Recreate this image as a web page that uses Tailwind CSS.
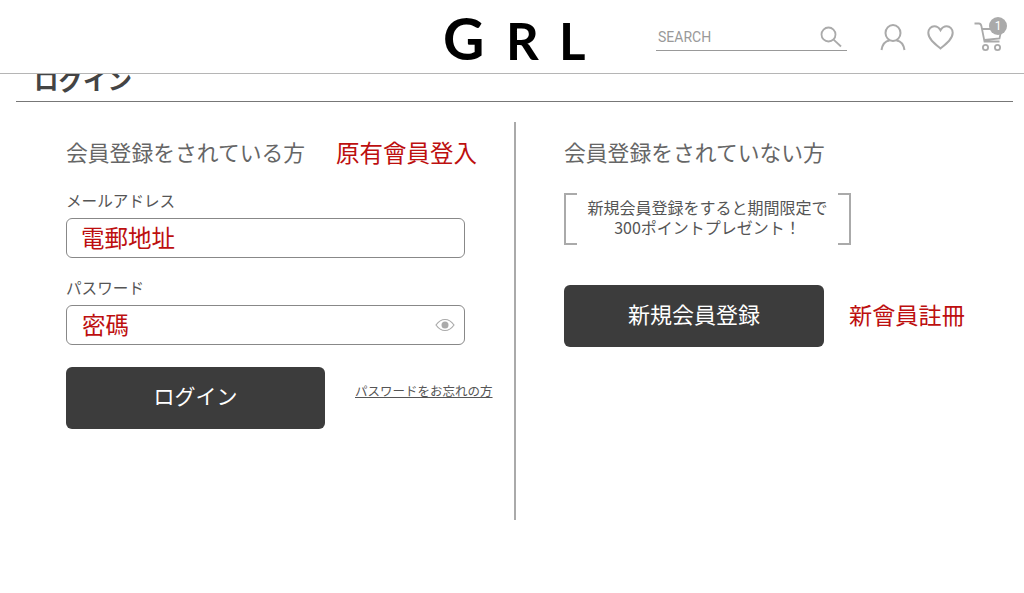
<!DOCTYPE html>
<html lang="ja">
<head>
<meta charset="utf-8">
<title>GRL ログイン</title>
<script src="https://cdn.jsdelivr.net/npm/@tailwindcss/browser@4"></script>
</head>
<body class="bg-white font-['Noto_Sans_CJK_JP','Noto_Sans_CJK_TC',sans-serif] overflow-hidden">
  <!-- header -->
  <header class="relative z-10 h-[74px] bg-white border-b border-[#b5b5b5] flex items-center text-[#aaa]">
    <div class="ml-[443px] mt-[4px] w-[213px] flex items-baseline font-['Lato',sans-serif] font-bold text-[51px] leading-none text-black">
      <span class="w-[63px] text-[57px]">G</span>
      <span class="w-[53px]">R</span>
      <span>L</span>
    </div>
    <div class="w-[191px] h-[28px] pl-[2px] pr-[5px] border-b border-[#999] flex items-center justify-between font-['Roboto',sans-serif] text-[14px] text-[#999]">
      <span class="mt-[3px]">SEARCH</span>
      <svg class="w-[22px] h-[22px] mt-[2px]" viewBox="0 0 22 22" fill="none" stroke="#aaa" stroke-width="1.8"><circle cx="8.5" cy="8.5" r="7"/><path d="M13.6 13.6 21 20.5"/></svg>
    </div>
    <svg class="ml-[33px] w-[26px] h-[27px] mt-[2px]" viewBox="0 0 26 27" fill="none" stroke="#aaa" stroke-width="2"><ellipse cx="13" cy="9" rx="7.5" ry="8"/><path d="M1.5 26c1-6 4.500-9 8-9.500M24.500 26c-1-6-4.500-9-8-9.500"/></svg>
    <svg class="ml-[21px] w-[27px] h-[25px] mt-[2px]" viewBox="0 0 27 25" fill="none" stroke="#aaa" stroke-width="2"><path d="M13.500 23.500C8 19 1.300 14 1.300 7.800 1.300 4 4 1.300 7.300 1.300c2.800 0 4.800 1.500 6.200 4 1.400-2.500 3.400-4 6.200-4 3.300 0 6 2.700 6 6.500 0 6.200-6.700 11.200-12.200 15.700Z"/></svg>
    <div class="relative ml-[20px] w-[30px] h-[30px] mt-[1px]">
      <svg class="w-[30px] h-[30px]" viewBox="0 0 30 30" fill="none" stroke="#aaa" stroke-width="1.800"><path d="M0.500 1.500h4.500c1.500 0 2 1 2.400 2.500L10.500 19.500h15M8 7h19.500l-2 9.500-15 1.500"/><circle cx="11.500" cy="25.500" r="2.600"/><circle cx="23.500" cy="25.500" r="2.600"/></svg>
      <span class="absolute left-[15px] top-[-5px] w-[18px] h-[18px] rounded-full bg-[#aaa] text-white text-[12px] leading-[18px] text-center font-['Roboto',sans-serif]">1</span>
    </div>
  </header>

  <main class="pl-[16px] w-[1013px]">
    <div class="h-[28px] border-b border-[#777] flex items-end pl-[18px] pb-[6px]">
      <h1 class="text-[24.500px] leading-[30px] font-bold text-[#444]">ログイン</h1>
    </div>

    <div class="flex mt-[20px] h-[398px]">
      <!-- left column -->
      <section class="w-[500px] border-r-2 border-[#aaa] pl-[50px] pt-[14px]">
        <div class="flex items-center h-[32px]">
          <h2 class="w-[270px] text-[21.800px] text-[#666] whitespace-nowrap">会員登録をされている方</h2>
          <span class="mt-[2px] text-[23.500px] text-[#bd0f0f] whitespace-nowrap">原有會員登入</span>
        </div>
        <label class="block mt-[21px] h-[22px] text-[15.600px] leading-[22px] text-[#555]">メールアドレス</label>
        <div class="mt-[7px] w-[399px] h-[40px] border border-[#888] rounded-[6px] pl-[14px] flex items-center text-[23.500px] text-[#bd0f0f]">電郵地址</div>
        <label class="block mt-[18px] h-[22px] text-[15.600px] leading-[22px] text-[#555]">パスワード</label>
        <div class="mt-[7px] w-[399px] h-[40px] border border-[#888] rounded-[6px] pl-[15px] pr-[9px] flex items-center justify-between text-[23.500px] text-[#bd0f0f]">
          <span>密碼</span>
          <svg class="w-[20px] h-[14px]" viewBox="0 0 20 14" fill="none" stroke="#aaa" stroke-width="1.200"><path d="M1 7c2.500-3.500 5.500-5.500 9-5.500s6.500 2 9 5.500c-2.500 3.500-5.500 5.500-9 5.500S3.500 10.500 1 7Z"/><circle cx="10" cy="7" r="3.500" fill="#aaa" stroke="none"/></svg>
        </div>
        <div class="mt-[22px] flex items-center">
          <button class="w-[259px] h-[62px] pb-[4px] bg-[#3c3c3c] rounded-[6px] text-white text-[21px]">ログイン</button>
          <a class="ml-[30px] text-[12.500px] text-[#555] underline whitespace-nowrap mt-[-13px]">パスワードをお忘れの方</a>
        </div>
      </section>

      <!-- right column -->
      <section class="pl-[48px] pt-[14px] w-[480px]">
        <h2 class="h-[32px] flex items-center text-[21.800px] text-[#666] whitespace-nowrap">会員登録をされていない方</h2>
        <div class="mt-[25px] w-[287px] h-[52px] flex">
          <div class="w-[13px] border-2 border-r-0 border-[#aaa]"></div>
          <p class="flex-1 text-center text-[16px] leading-[20px] text-[#555] pt-[4px] whitespace-nowrap">新規会員登録をすると期間限定で<br>300ポイントプレゼント！</p>
          <div class="w-[13px] border-2 border-l-0 border-[#aaa]"></div>
        </div>
        <div class="mt-[40px] flex items-center">
          <button class="w-[260px] h-[62px] pb-[6px] bg-[#3c3c3c] rounded-[6px] text-white text-[22px]">新規会員登録</button>
          <span class="ml-[25px] mt-[-4px] text-[23.200px] text-[#bd0f0f] whitespace-nowrap">新會員註冊</span>
        </div>
      </section>
    </div>
  </main>
</body>
</html>
